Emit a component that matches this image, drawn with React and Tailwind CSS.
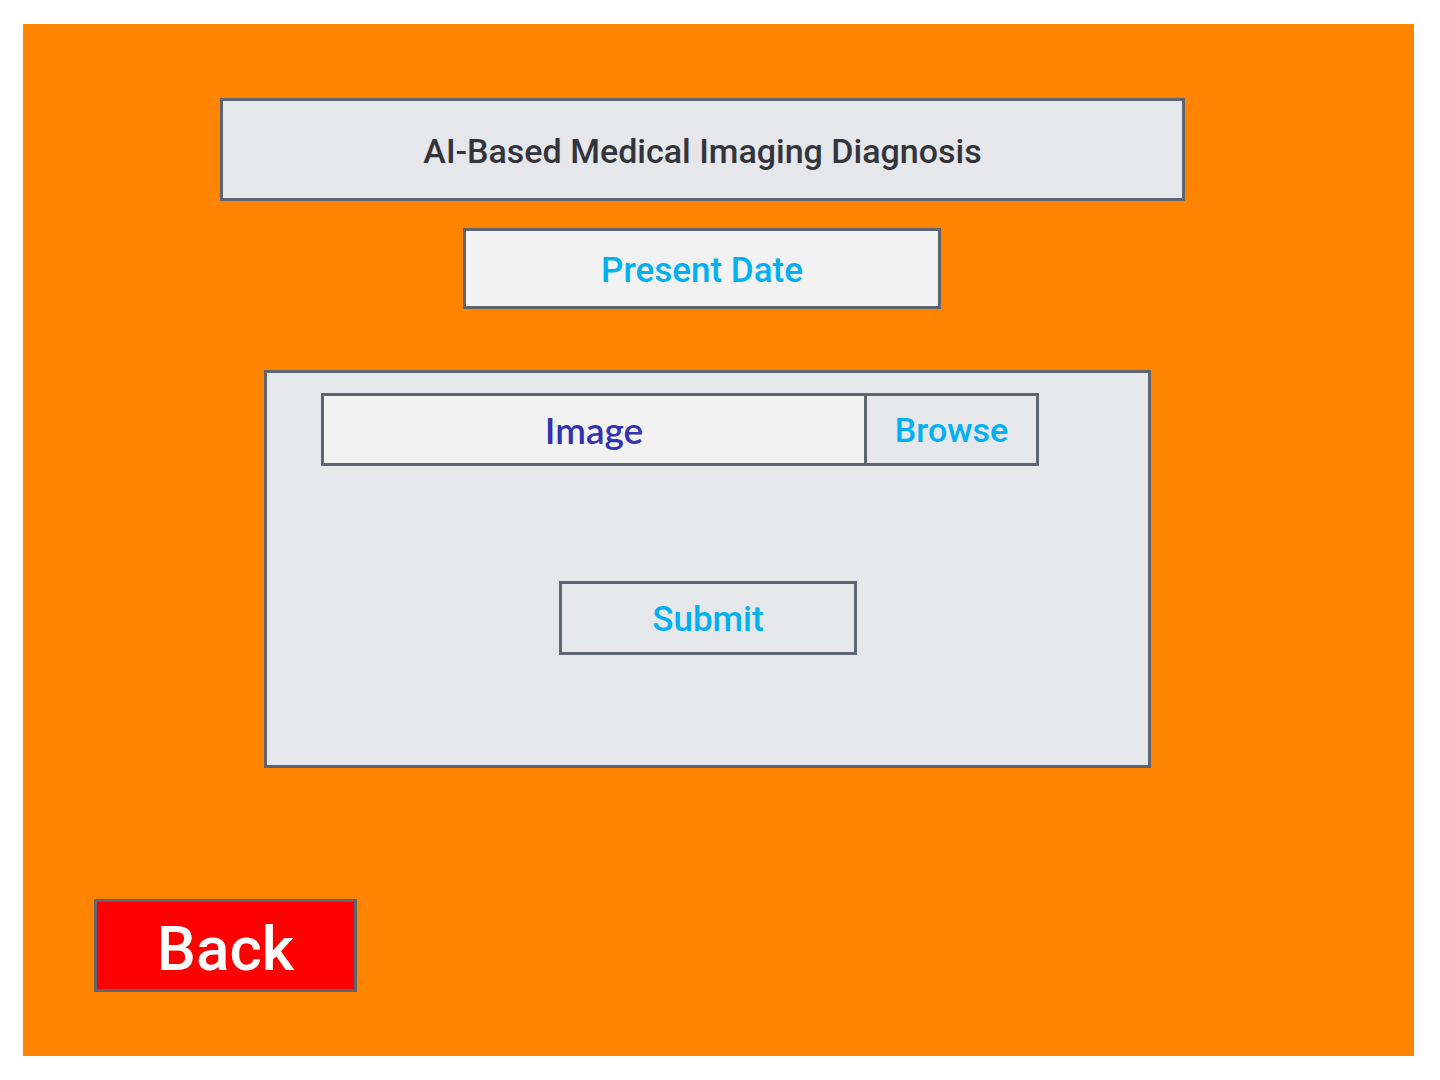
import React from "react";

const App = () => {
  return (
    <div className="min-h-[1080px] w-[1440px] bg-white pt-[24px] pl-[23px]" style={{ fontFamily: 'Roboto, "Liberation Sans", sans-serif' }}>
      <div className="flex h-[1032px] w-[1391px] flex-col items-start bg-[#ff8500]">
        {/* Title */}
        <div className="ml-[197px] mt-[74px] flex h-[103px] w-[965px] items-center justify-center border-[3px] border-[#5f6570] bg-[#e6e7ea] pt-[3px]">
          <h1 className="text-[34px] font-medium text-[#34343c]">AI-Based Medical Imaging Diagnosis</h1>
        </div>

        {/* Date */}
        <div className="ml-[440px] mt-[27px] flex h-[81px] w-[478px] items-center justify-center border-[3px] border-[#5f6570] bg-[#f2f2f2] pt-[5px]">
          <span className="text-[35px] font-medium text-[#00b0f0]">Present Date</span>
        </div>

        {/* Upload panel */}
        <div className="ml-[241px] mt-[61px] flex h-[398px] w-[887px] flex-col items-start border-[3px] border-[#5f6570] bg-[#e6e7ea]">
          <div className="ml-[54px] mt-[20px] flex h-[73px]">
            <div className="flex w-[546px] items-center justify-center border-[3px] border-[#5f6570] bg-[#f2f2f2]">
              <span className="text-[37px] font-semibold text-[#3333b2]" style={{ fontFamily: 'Lato, sans-serif' }}>Image</span>
            </div>
            <button className="flex w-[172px] items-center justify-center border-[3px] border-l-0 border-[#5f6570] bg-[#e6e7ea] pt-[2px] text-[34px] font-medium text-[#00b0f0]">
              Browse
            </button>
          </div>
          <button className="ml-[292px] mt-[115px] flex h-[74px] w-[298px] items-center justify-center border-[3px] border-[#5f6570] bg-[#e6e7ea] pt-[5px] text-[35px] font-medium text-[#00b0f0]">
            Submit
          </button>
        </div>

        {/* Back */}
        <button className="ml-[71px] mt-[131px] flex h-[93px] w-[263px] items-center justify-center border-[3px] border-[#5f6570] bg-[#ff0000] pt-[5px] text-[62px] font-medium text-white">
          Back
        </button>
      </div>
    </div>
  );
};

export default App;
